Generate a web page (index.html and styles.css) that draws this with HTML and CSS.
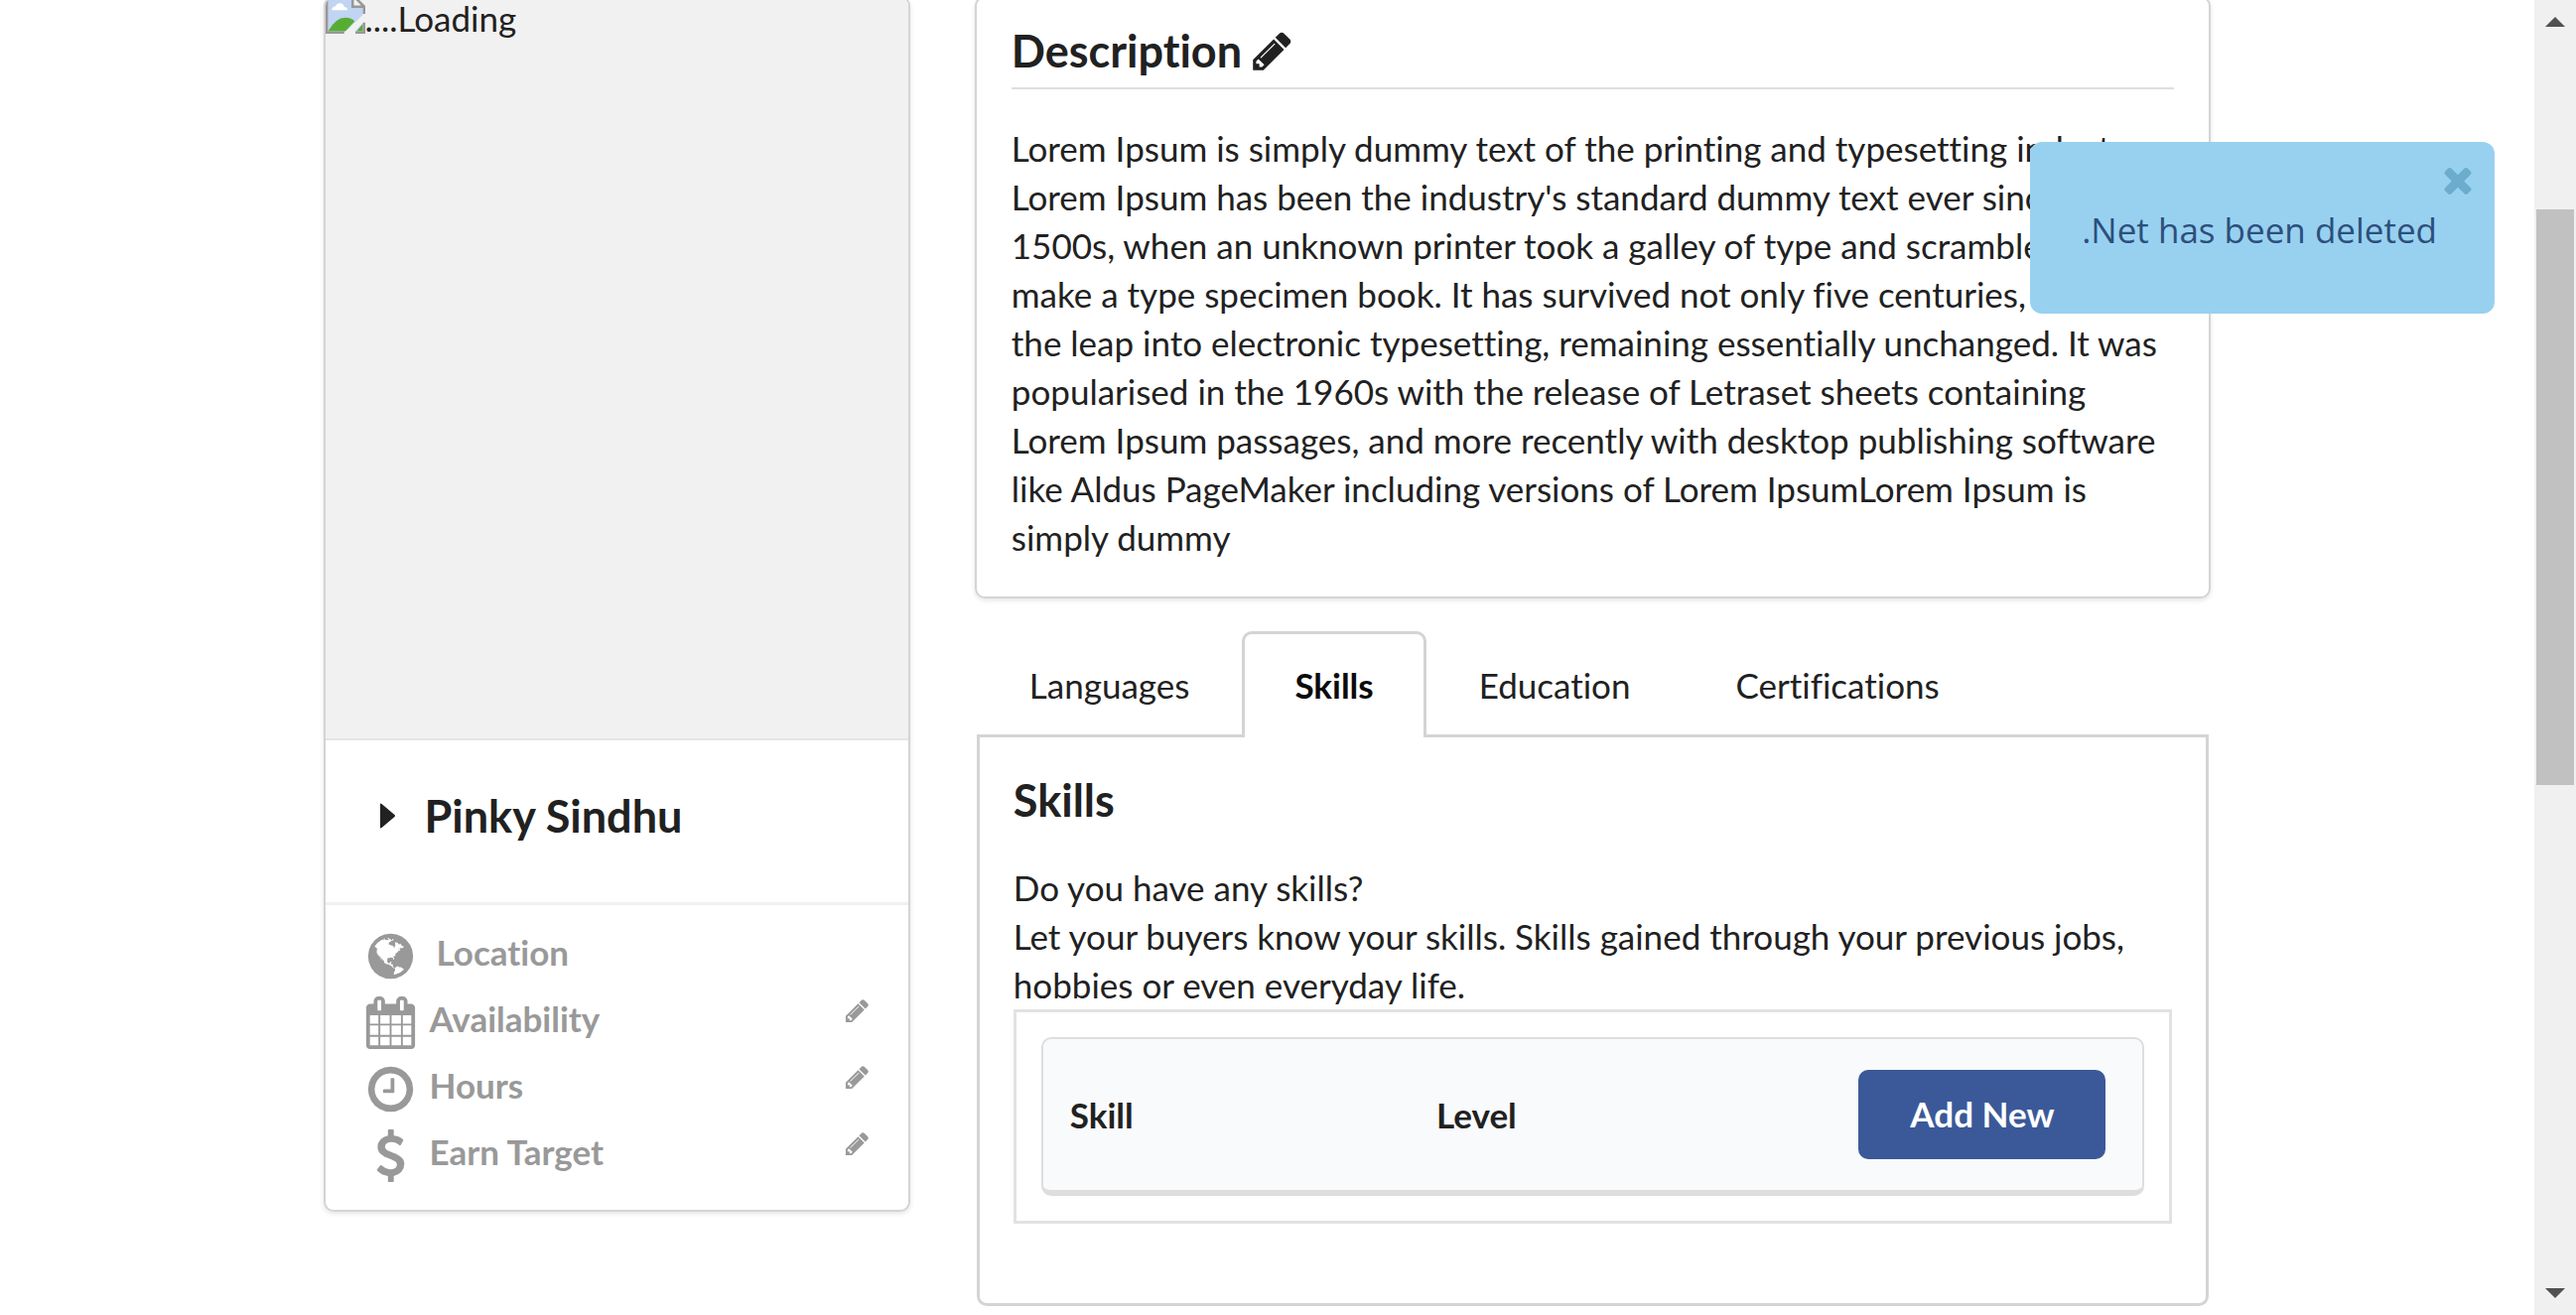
FILE: index.html
```html
<!DOCTYPE html>
<html lang="en">
<head>
<meta charset="utf-8">
<title>Profile</title>
<link rel="stylesheet" href="styles.css">
</head>
<body>
<svg class="sprite" aria-hidden="true">
  <symbol id="pencil" viewBox="0 0 1792 1792"><path d="M491 1536l91-91-235-235-91 91v107h128v128h107zm523-928q0-22-22-22-10 0-17 7l-542 542q-7 7-7 17 0 22 22 22 10 0 17-7l542-542q7-7 7-17zm-54-192l416 416-832 832h-416v-416zm683 96q0 53-37 90l-166 166-416-416 166-165q36-38 90-38 53 0 91 38l235 234q37 39 37 91z"/></symbol>
</svg>
<div class="viewport">
  <main class="page">
    <aside class="card profile">
      <div class="photo">
        <svg class="broken" viewBox="0 0 16 16" aria-hidden="true">
          <path fill="#c0d4f3" d="M1 1h10l4 4v10H1z"/>
          <path fill="#fff" d="M2.500 6.500q0-1.400 1.500-1.600 .5-1.400 2-1.200 1.300 .2 1.500 1.500 1.300 0 1.300 1.300z"/>
          <path fill="#57ad34" d="M1 15q3-5.500 7-5.500 2.500 0 3.700 1.500L8 15z"/>
          <path fill="#f1f1f1" d="M16 7.500V10.500l-5 5.500H7z"/>
          <path fill="#57ad34" d="M12.500 15l2.500-3v3z"/>
          <path fill="#f1f1f1" d="M11 1v4h4z"/>
          <path fill="none" stroke="#979797" d="M.5 .5v15h7M.5 .5h10.500l4.500 4.500v3M10.900 .5v4.600h4.600M12 15.500h3.500v-4"/>
        </svg>
        <span>....Loading</span>
      </div>
      <h2 class="name">
        <svg class="caret" viewBox="0 0 15 26" aria-hidden="true"><path d="M0 1.500Q0 0 1.500 1L14.500 12q1 1 0 2L1.500 25Q0 26 0 24.500z"/></svg>
        Pinky Sindhu
      </h2>
      <ul class="facts">
        <li>
          <svg class="icon" viewBox="0 0 1792 1792" aria-hidden="true"><path d="M896 128q209 0 385.500 103t279.500 279.500 103 385.500-103 385.500-279.500 279.500-385.500 103-385.500-103-279.500-279.500-103-385.500 103-385.500 279.500-279.500 385.500-103zm274 521q-2 1-9.500 9.500t-13.500 9.500q2 0 4.500-5t5-11 3.500-7q6-7 22-15 14-6 52-12 34-8 51 11-2-2 9.500-13t14.500-12q3-2 15-4.500t15-7.500l2-22q-12 1-17.500-7t-6.500-21q0 2-6 8 0-7-4.500-8t-11.500 1-9 1q-10-3-15-7.500t-8-16.500-4-15q-2-5-9.500-11t-9.500-10q-1-2-2.500-5.500t-3-6.500-4-5.500-5.500-2.500-7 5-7.500 10-4.500 5q-3-2-6-1.500t-4.500 1-4.500 3-5 3.500q-3 2-8.500 3t-8.500 2q15-5-1-11-10-4-16-3 9-4 7.500-12t-8.500-14h5q-1-4-8.500-8.500t-17.500-8.500-13-6q-8-5-34-9.500t-33-.5q-5 6-4.500 10.500t4 14 3.500 12.500q1 6-5.500 13t-6.500 12q0 7 14 15.500t10 21.500q-3 8-16 16t-16 12q-5 8-1.500 18.500t10.500 16.500q2 2 1.500 4t-3.500 4.500-5.500 4-6.500 3.500l-3 2q-11 5-20.500-6t-13.500-26q-7-25-16-30-23-8-29 1-5-13-41-26-25-9-58-4 6-1 0-15-7-15-19-12 3-6 4-17.500t1-13.500q3-13 12-23 1-1 7-8.500t9.500-13.500.5-6q35 4 50-11 5-5 11.500-17t10.500-17q9-6 14-5.500t14.500 5.500 14.500 5q14 1 15.500-11t-7.500-20q12 1 3-17-4-7-8-9-12-4-27 5-8 4 2 8-1-1-9.500 10.500t-16.500 17.500-16-5q-1-1-5.500-13.500t-9.500-13.500q-8 0-16 15 3-8-11-15t-24-8q19-12-8-27-7-4-20.500-5t-19.500 4q-5 7-5.500 11.500t5 8 10.500 5.500 11.500 4 8.500 3q14 10 8 14-2 1-8.500 3.500t-11.500 4.500-6 4q-3 4 0 14t-2 14q-5-5-9-17.500t-7-16.500q7 9-25 6l-10-1q-4 0-16 2t-20.500 1-13.500-8q-4-8 0-20 1-4 4-2-4-3-11-9.500t-10-8.500q-46 15-94 41 6 1 12-1 5-2 13-6.500t10-5.500q34-14 42-7l5-5q14 16 20 25-7-4-30-1-20 6-22 12 7 12 5 18-4-3-11.500-10t-14.500-11-15-5q-16 0-22 1-146 80-235 222 7 7 12 8 4 1 5 9t2.500 11 11.500-3q9 8 3 19 1-1 44 27 19 17 21 21 3 11-10 18-1-2-9-9t-9-4q-3 5 .5 18.500t10.500 12.500q-7 0-9.500 16t-2.500 35.500-1 23.500l2 1q-3 12 5.500 34.500t21.500 19.500q-13 3 20 43 6 8 8 9 3 2 12 7.500t15 10 10 10.500q4 5 10 22.500t14 23.500q-2 6 9.500 20t10.500 23q-1 0-2.500 1t-2.500 1q3 7 15.500 14t15.500 13q1 3 2 10t3 11 8 2q2-20-24-62-15-25-17-29-3-5-5.500-15.500t-4.500-14.500q2 0 6 1.500t8.500 3.500 7.500 4 2 3q-3 7 2 17.500t12 18.500 17 19 12 13q6 6 14 19.500t0 13.500q9 0 20 10.500t17 19.500q5 8 8 26t5 24q2 7 8.500 13.500t12.500 9.500l16 8 13 7q5 2 18.500 10.500t21.500 11.500q10 4 16 4t14.500-2.500 13.500-3.500q15-2 29 15t21 21q36 19 55 11-2 1 .5 7.500t8 15.500 9 14.500 5.500 8.500q5 6 18 15t18 15q6-4 7-9-3 8 7 20t18 10q14-3 14-32-31 15-49-18 0-1-2.500-5.500t-4-8.500-2.500-8.500 0-7.500 5-3q9 0 10-3.500t-2-12.500-4-13q-1-8-11-20t-12-15q-5 9-16 8t-16-9q0 1-1.500 5.500t-1.500 6.500q-13 0-15-1 1-3 2.500-17.500t3.500-22.500q1-4 5.500-12t7.500-14.500 4-12.500-4.500-9.500-17.500-2.500q-19 1-26 20-1 3-3 10.500t-5 11.500-9 7q-7 3-24 2t-24-5q-13-8-22.500-29t-9.500-37q0-10 2.500-26.500t3-25-5.500-24.500q3-2 9-9.500t10-10.500q2-1 4.500-1.500t4.500 0 4-1.500 3-6q-1-1-4-3-3-3-4-3 7 3 28.500-1.500t27.500 1.500q15 11 22-2 0-1-2.500-9.500t-.5-13.500q5 27 29 9 3 3 15.500 5t17.500 5q3 2 7 5.500t5.500 4.500 5-.5 8.500-6.500q10 14 12 24 11 40 19 44 7 3 11 2t4.500-9.500 0-14-1.500-12.500l-1-8v-18l-1-8q-15-3-18.500-12t1.500-18.500 15-18.500q1-1 8-3.500t15.500-6.500 12.500-8q21-19 15-35 7 0 11-9-1 0-5-3t-7.500-5-4.500-2q9-5 2-16 5-3 7.500-11t7.500-10q9 12 21 2 7-8 1-16 5-7 20.500-10.500t18.500-9.500q7 2 8-2t1-12 3-12q4-5 15-9t13-5l17-11q3-4 0-4 18 2 31-11 10-11-6-20 3-6-3-9.500t-15-5.500q3-1 11.500-.5t10.500-1.500q15-10-7-16-17-5-43 12zm-163 877q206-36 351-189-3-3-12.500-4.500t-12.500-3.500q-18-7-24-8 1-7-2.500-13t-8-9-12.500-8-11-7q-2-2-7-6t-7-5.500-7.500-4.500-8.500-2-10 1l-3 1q-3 1-5.500 2.500t-5.500 3-4 3 0 2.500q-21-17-36-22-5-1-11-5.500t-10.500-7-10-1.500-11.500 7q-5 5-6 15t-2 13q-7-5 0-17.500t2-18.500q-3-6-10.500-4.500t-12 4.500-11.500 8.500-9 6.500-8.500 5.500-8.500 7.500q-3 4-6 12t-5 11q-2-4-11.500-6.500t-9.500-5.500q2 10 4 35t5 38q7 31-12 48-27 25-29 40-4 22 12 26 0 7-8 20.500t-7 21.500q0 6 2 16z"/></svg>
          <span class="label spaced">Location</span>
        </li>
        <li>
          <svg class="icon" viewBox="0 0 1792 1792" aria-hidden="true"><path d="M192 1664h288v-288h-288v288zm352 0h320v-288h-320v288zm-352-352h288v-320h-288v320zm352 0h320v-320h-320v320zm-352-384h288v-288h-288v288zm736 736h320v-288h-320v288zm-384-736h320v-288h-320v288zm768 736h288v-288h-288v288zm-384-352h320v-320h-320v320zm-352-864v-288q0-13-9.500-22.500t-22.500-9.500h-64q-13 0-22.500 9.500t-9.500 22.500v288q0 13 9.500 22.500t22.500 9.500h64q13 0 22.500-9.500t9.500-22.500zm736 864h288v-320h-288v320zm-384-384h320v-288h-320v288zm384 0h288v-288h-288v288zm32-480v-288q0-13-9.500-22.500t-22.500-9.500h-64q-13 0-22.500 9.500t-9.500 22.500v288q0 13 9.500 22.500t22.500 9.500h64q13 0 22.500-9.500t9.500-22.500zm384-64v1280q0 52-38 90t-90 38h-1408q-52 0-90-38t-38-90v-1280q0-52 38-90t90-38h128v-96q0-66 47-113t113-47h64q66 0 113 47t47 113v96h384v-96q0-66 47-113t113-47h64q66 0 113 47t47 113v96h128q52 0 90 38t38 90z"/></svg>
          <span class="label">Availability</span>
          <button class="edit" type="button" aria-label="Edit availability"><svg><use href="#pencil"/></svg></button>
        </li>
        <li>
          <svg class="icon" viewBox="0 0 1792 1792" aria-hidden="true"><path d="M1024 544v448q0 14-9 23t-23 9h-320q-14 0-23-9t-9-23v-64q0-14 9-23t23-9h224v-352q0-14 9-23t23-9h64q14 0 23 9t9 23zm416 352q0-148-73-273t-198-198-273-73-273 73-198 198-73 273 73 273 198 198 273 73 273-73 198-198 73-273zm224 0q0 209-103 385.500t-279.500 279.500-385.500 103-385.500-103-279.500-279.500-103-385.500 103-385.500 279.500-279.500 385.500-103 385.500 103 279.500 279.500 103 385.500z"/></svg>
          <span class="label">Hours</span>
          <button class="edit" type="button" aria-label="Edit hours"><svg><use href="#pencil"/></svg></button>
        </li>
        <li>
          <svg class="icon" viewBox="0 0 1792 1792" aria-hidden="true"><path d="M1362 1185q0 153-99.500 263.500t-258.500 136.500v175q0 14-9 23t-23 9h-135q-13 0-22.500-9.500t-9.500-22.500v-175q-66-9-127.500-31t-101.500-44.500-74-48-46.500-37.500-17.500-18q-17-21-2-41l103-135q7-10 23-12 15-2 24 9l2 2q113 99 243 125 37 8 74 8 81 0 142.500-43t61.500-122q0-28-15-53t-33.500-42-58.500-37.500-66-32-80-32.500q-39-16-61.500-25t-61.500-26.500-62.500-31-56.500-35.500-53.500-42.500-43.500-49-35.500-58-21-66.500-8.500-78q0-138 98-242t255-134v-180q0-13 9.500-22.500t22.500-9.500h135q14 0 23 9t9 23v176q57 6 110.500 23t87 33.500 63.500 37.500 39 29 15 14q17 18 5 38l-81 146q-8 15-23 16-14 3-27-7-3-3-14.500-12t-39-26.500-58.500-32-74.500-26-85.500-11.500q-95 0-155 43t-60 111q0 26 8.500 48t29.500 41.500 39.500 33 56 31 60.500 27 70 27.500q53 20 81 31.500t76 35 75.500 42.500 62 50 53 63.500 31.500 76.500 13 94z"/></svg>
          <span class="label">Earn Target</span>
          <button class="edit" type="button" aria-label="Edit earn target"><svg><use href="#pencil"/></svg></button>
        </li>
      </ul>
    </aside>
    <div class="details">
      <section class="card description">
        <h3 class="title ruled">Description<button class="edit large" type="button" aria-label="Edit description"><svg><use href="#pencil"/></svg></button></h3>
        <p>Lorem Ipsum is simply dummy text of the printing and typesetting industry. Lorem Ipsum has been the industry's standard dummy text ever since the 1500s, when an unknown printer took a galley of type and scrambled it to make a type specimen book. It has survived not only five centuries, but also the leap into electronic typesetting, remaining essentially unchanged. It was popularised in the 1960s with the release of Letraset sheets containing Lorem Ipsum passages, and more recently with desktop publishing software like Aldus PageMaker including versions of Lorem IpsumLorem Ipsum is simply dummy</p>
      </section>
      <section class="tabbed">
        <nav class="tabs">
          <a href="#languages">Languages</a>
          <a href="#skills" class="active">Skills</a>
          <a href="#education">Education</a>
          <a href="#certifications">Certifications</a>
        </nav>
        <div class="panel" id="skills">
          <h3 class="title">Skills</h3>
          <p>Do you have any skills?<br>Let your buyers know your skills. Skills gained through your previous jobs, hobbies or even everyday life.</p>
          <div class="frame">
            <table>
              <thead>
                <tr><th class="col-skill">Skill</th><th>Level</th><th class="col-action"><button class="add" type="button">Add New</button></th></tr>
              </thead>
            </table>
          </div>
        </div>
      </section>
    </div>
  </main>
</div>
<div class="scrollbar" aria-hidden="true">
  <span class="arrow up"></span>
  <span class="track"><span class="thumb"></span></span>
  <span class="arrow down"></span>
</div>
<div class="toast" role="status">
  <button class="close" type="button" aria-label="Close"><svg viewBox="302 238 1188 1316"><path d="M1490 1322q0 40-28 68l-136 136q-28 28-68 28t-68-28l-294-294-294 294q-28 28-68 28t-68-28l-136-136q-28-28-28-68t28-68l294-294-294-294q-28-28-28-68t28-68l136-136q28-28 68-28t68 28l294 294 294-294q28-28 68-28t68 28l136 136q28 28 28 68t-28 68l-294 294 294 294q28 28 28 68z"/></svg></button>
  .Net has been deleted
</div>
</body>
</html>
```
FILE: styles.css
```css
* { box-sizing: border-box; }

body {
  margin: 0;
  display: flex;
  height: 100vh;
  overflow: hidden;
  background: #fff;
  color: #212121;
  font: 35px/49px Lato, "Liberation Sans", sans-serif;
  font-variant-ligatures: none;
}

h2, h3, p, ul { margin: 0; padding: 0; }
button { font: inherit; border: 0; padding: 0; background: none; cursor: pointer; }
svg { display: block; fill: currentColor; }
.sprite { display: none; }

.viewport { flex: 1; min-width: 0; overflow: hidden; }

.page {
  display: grid;
  grid-template-columns: 591fr 1245fr;
  align-items: start;
  gap: 65px;
  width: 74.5%;
  margin: -4px auto 0;
}

.card {
  border: 2px solid #d4d4d5;
  border-radius: 10px;
  box-shadow: 0 2px 5px #e4e4e4;
}

/* Profile card */
.profile { overflow: hidden; }

.photo {
  display: flex;
  align-items: flex-start;
  aspect-ratio: 587 / 752;
  margin-top: -4px;
  background: #f1f1f1;
  border-bottom: 2px solid #e4e4e4;
}
.broken { width: 40px; height: 40px; }

.name {
  display: flex;
  align-items: center;
  gap: 30px;
  padding: 47px 55px 58px;
  border-bottom: 3px solid #f0f0f0;
  font-size: 45px;
  line-height: 58px;
}
.caret { width: 15px; height: 26px; }

.facts {
  list-style: none;
  padding: 14px 38px 25px 39px;
  color: #999;
  font-weight: bold;
}
.facts li { display: flex; align-items: center; gap: 13px; height: 67px; }
.icon { width: 53px; height: 53px; margin-top: 8px; }
.label { flex: 1; }
.spaced { padding-left: 7px; }

.edit { color: inherit; }
.edit svg { width: 27px; height: 27px; }
.facts .edit { align-self: flex-start; margin-top: 12px; }
.edit.large svg { width: 45px; height: 45px; }

/* Description card */
.description { padding: 24px 35px 35px; }
.title { font-size: 45px; line-height: 58px; margin-bottom: 35px; }
.ruled {
  display: flex;
  align-items: center;
  gap: 8px;
  padding-bottom: 8px;
  border-bottom: 2px solid #dededf;
}

/* Tabs */
.tabbed { margin: 33px 2px 0; }
.tabs { display: flex; border-bottom: 3px solid #d4d4d5; }
.tabs a {
  padding: 27px 50px 25px;
  border: 3px solid transparent;
  border-bottom: 0;
  color: inherit;
  text-decoration: none;
}
.tabs .active {
  margin-bottom: -3px;
  padding-bottom: 28px;
  border-color: #d4d4d5;
  border-radius: 10px 10px 0 0;
  background: #fff;
  color: #0b0b0b;
  font-weight: bold;
}
.panel {
  padding: 34px 34px 80px;
  border: 3px solid #d4d4d5;
  border-top: 0;
  border-radius: 0 0 10px 10px;
}

/* Skills table */
.frame { padding: 25px; border: 3px solid #e2e2e2; }
table {
  width: 100%;
  table-layout: fixed;
  border: 2px solid #dedede;
  border-bottom: 6px solid #dedede;
  border-radius: 10px;
  border-spacing: 0;
  background: #f9fafb;
}
th { padding: 31px 27px 31px; text-align: left; }
.col-skill { width: 33.33%; }
.col-action { padding-right: 37px; text-align: right; }
.add {
  padding: 20px 52px 21px;
  border-radius: 10px;
  background: #3b5998;
  color: #fff;
}

/* Scrollbar */
.scrollbar {
  display: flex;
  flex-direction: column;
  align-items: center;
  gap: 17px;
  width: 42px;
  padding: 17px 2px;
  background: #f0f0f0;
}
.arrow { border: 10px solid transparent; }
.up { border-top: 0; border-bottom-color: #505050; }
.down { border-bottom: 0; border-top-color: #505050; }
.track { flex: 1; width: 100%; padding-top: 167px; }
.thumb { display: block; height: 54.2%; background: #c1c1c1; }

/* Notification */
.toast {
  position: fixed;
  top: 143px;
  right: 82px;
  padding: 64px 58px 60px 52px;
  border-radius: 12px;
  background: #98d1f0;
  color: #2c4f7c;
  font-family: "Open Sans", "Noto Sans", sans-serif;
}
.close { position: absolute; top: 23px; right: 23px; color: #6caccd; }
.close svg { width: 28px; height: 30px; }
```
